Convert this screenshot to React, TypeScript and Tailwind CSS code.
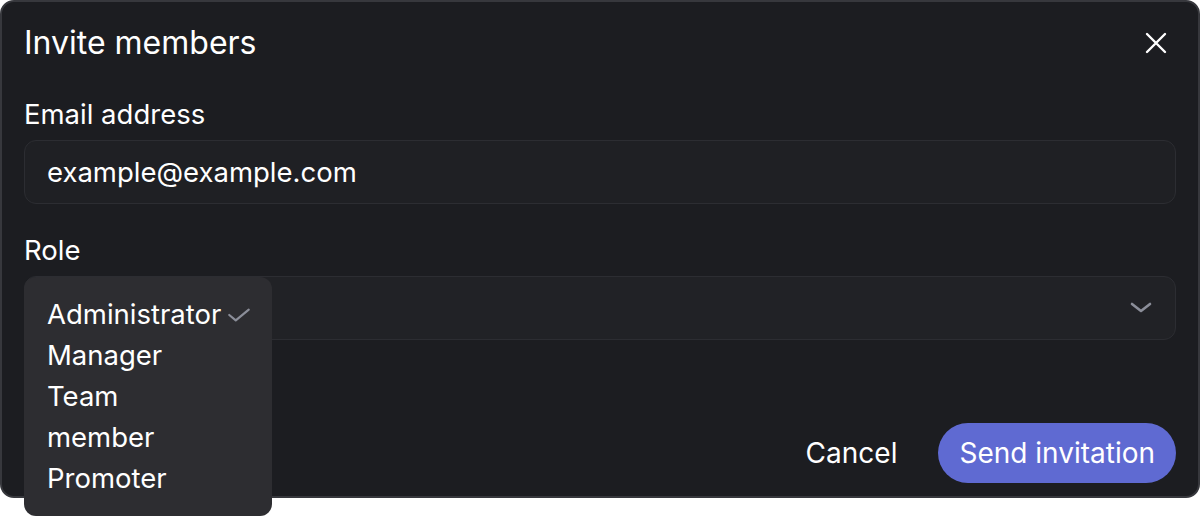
import React from "react";

const ROLES = ["Administrator", "Manager", "Team member", "Promoter"];

export default function App() {
  return (
    <div
      className="relative h-[516px] w-[1200px] bg-white"
      style={{ fontFamily: "Inter, 'Noto Sans', sans-serif" }}
    >
      <div className="flex h-[498px] w-[1200px] flex-col rounded-[14px] border-2 border-[#37383d] bg-[#1c1d21] px-[22px] pt-[22px] text-white">
        <div className="flex items-center justify-between">
          <h1 className="text-[32px] leading-[38px] font-normal">Invite members</h1>
          <button className="mr-[8px] text-white">
            <svg width="24" height="24" viewBox="0 0 24 24" fill="none" stroke="currentColor" strokeWidth="2.4" strokeLinecap="round">
              <path d="M3 3l18 18M21 3L3 21" />
            </svg>
          </button>
        </div>

        <label className="mt-[36px] text-[27.5px] leading-[32px]">Email address</label>
        <div className="mt-[10px] flex h-[64px] items-center rounded-[12px] border border-[#2c2d32] bg-[#1f2024] px-[22px] pt-[2px] text-[27.5px]">
          example@example.com
        </div>

        <label className="mt-[30px] text-[27.5px] leading-[32px]">Role</label>
        <div className="mt-[10px] flex h-[64px] items-center justify-end rounded-[12px] border border-[#2c2d32] bg-[#212226] px-[22px]">
          <svg width="24" height="24" viewBox="0 0 24 24" fill="none" stroke="#8b8e99" strokeWidth="2.6" strokeLinecap="round" strokeLinejoin="round">
            <path d="M3 8l9 7 9-7" />
          </svg>
        </div>

        <div className="mt-[83px] flex items-center justify-end gap-[41px]">
          <button className="text-[28px] text-white">Cancel</button>
          <button className="h-[60px] rounded-full bg-[#5f6ad2] px-[21px] text-[28px] text-white">
            Send invitation
          </button>
        </div>
      </div>

      <div className="absolute top-[277px] left-[24px] w-[248px] rounded-[12px] bg-[#2d2d31] pt-[17px] pr-[20px] pb-[17px] pl-[23px] text-[27.5px] leading-[41px] text-white">
        {ROLES.map((r, i) => (
          <div key={r} className="flex items-start gap-[6px]">
            <span className="w-[173px]">{r}</span>
            <span className="flex h-[41px] w-[26px] items-center">
              {i === 0 && (
                <svg width="26" height="26" viewBox="0 0 24 24" fill="none" stroke="#8b8e99" strokeWidth="2" strokeLinecap="round" strokeLinejoin="round">
                  <path d="M3 12l6 5L21 7" />
                </svg>
              )}
            </span>
          </div>
        ))}
      </div>
    </div>
  );
}
